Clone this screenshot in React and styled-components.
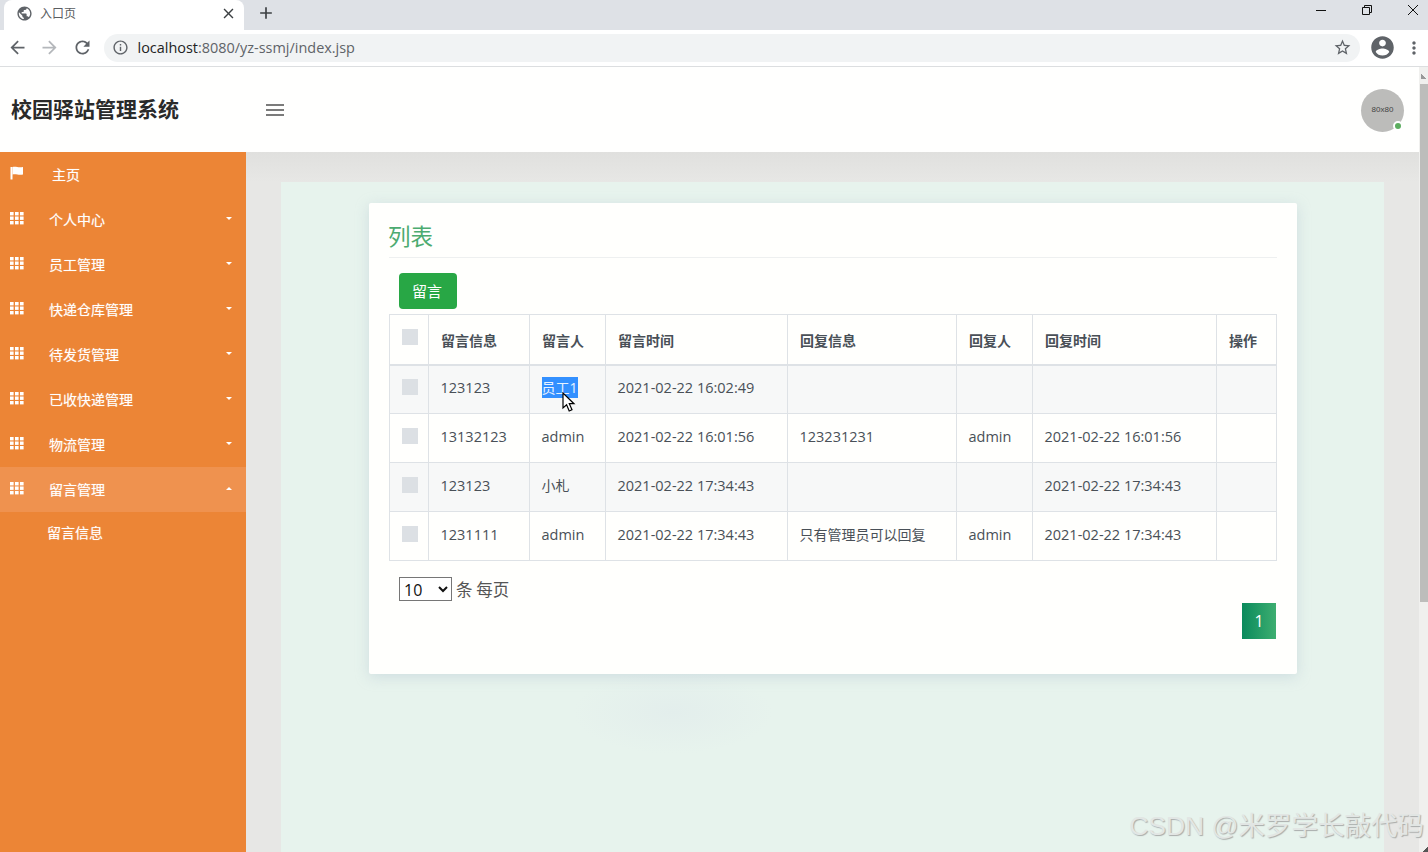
import React from "react";
import styled, { createGlobalStyle } from "styled-components";

const cjk = '"Noto Sans CJK SC", sans-serif';
const latin = `"Open Sans", ${cjk}`;

const Global = createGlobalStyle`
  html, body { margin: 0; height: 100%; overflow: hidden; background: #fff; }
  * { box-sizing: border-box; }
  #root { height: 100%; }
`;

const menu = [
  { label: "个人中心" },
  { label: "员工管理" },
  { label: "快递仓库管理" },
  { label: "待发货管理" },
  { label: "已收快递管理" },
  { label: "物流管理" },
  { label: "留言管理", open: true },
];

const columns = [
  { title: "留言信息", width: 101 },
  { title: "留言人", width: 76 },
  { title: "留言时间", width: 182 },
  { title: "回复信息", width: 169 },
  { title: "回复人", width: 76 },
  { title: "回复时间", width: 184 },
  { title: "操作", width: 60 },
];

const rows = [
  ["123123", "员工1", "2021-02-22 16:02:49", "", "", ""],
  ["13132123", "admin", "2021-02-22 16:01:56", "123231231", "admin", "2021-02-22 16:01:56"],
  ["123123", "小札", "2021-02-22 17:34:43", "", "", "2021-02-22 17:34:43"],
  ["1231111", "admin", "2021-02-22 17:34:43", "只有管理员可以回复", "admin", "2021-02-22 17:34:43"],
];

const Icon = ({ d, size = 24, color = "#5f6368" }) => (
  <svg width={size} height={size} viewBox="0 0 24 24" fill={color}>
    <path d={d} />
  </svg>
);

const GridIcon = () => (
  <svg width="14" height="13" viewBox="0 0 14 13" fill="#fff">
    {[0, 5, 10].map((x) =>
      [0, 4.5, 9].map((y) => <rect key={`${x}-${y}`} x={x} y={y} width="3.6" height="3.4" />)
    )}
  </svg>
);

const FlagIcon = () => (
  <svg width="14" height="14" viewBox="0 0 14 14" fill="#fff">
    <path d="M0.500 1h2v12.500h-2z" />
    <path d="M2.500 1c3.500-1.200 5.500 1.200 10.500 0v7.500c-4.500 1.200-7-1.200-10.500 0z" />
  </svg>
);

const paths = {
  globe:
    "M12 2C6.48 2 2 6.48 2 12s4.480 10 10 10 10-4.480 10-10S17.520 2 12 2zm-1 17.930c-3.950-.490-7-3.850-7-7.930 0-.620.080-1.210.210-1.790L9 15v1c0 1.100.900 2 2 2v1.930zm6.900-2.540c-.260-.810-1-1.390-1.900-1.390h-1v-3c0-.550-.450-1-1-1H8v-2h2c.550 0 1-.450 1-1V7h2c1.100 0 2-.900 2-2v-.410c2.930 1.190 5 4.060 5 7.410 0 2.080-.800 3.970-2.100 5.390z",
  close:
    "M19 6.410 17.590 5 12 10.590 6.410 5 5 6.410 10.590 12 5 17.590 6.410 19 12 13.410 17.590 19 19 17.590 13.410 12z",
  plus: "M19 13h-6v6h-2v-6H5v-2h6V5h2v6h6v2z",
  back: "M20 11H7.830l5.590-5.590L12 4l-8 8 8 8 1.410-1.410L7.830 13H20v-2z",
  forward: "M12 4l-1.410 1.410L16.170 11H4v2h12.170l-5.580 5.590L12 20l8-8z",
  reload:
    "M17.650 6.350C16.200 4.900 14.210 4 12 4c-4.420 0-7.990 3.580-7.990 8s3.570 8 7.990 8c3.730 0 6.840-2.550 7.730-6h-2.080c-.820 2.330-3.040 4-5.650 4-3.310 0-6-2.690-6-6s2.690-6 6-6c1.660 0 3.140.690 4.220 1.780L13 11h7V4l-2.350 2.350z",
  info:
    "M11 7h2v2h-2zm0 4h2v6h-2zm1-9C6.480 2 2 6.480 2 12s4.480 10 10 10 10-4.480 10-10S17.520 2 12 2zm0 18c-4.410 0-8-3.590-8-8s3.590-8 8-8 8 3.590 8 8-3.590 8-8 8z",
  star:
    "M22 9.240l-7.190-.620L12 2 9.190 8.630 2 9.240l5.460 4.730L5.820 21 12 17.270 18.180 21l-1.630-7.030L22 9.240zM12 15.400l-3.760 2.270 1-4.280-3.320-2.880 4.380-.380L12 6.100l1.710 4.040 4.380.380-3.320 2.880 1 4.280L12 15.400z",
  account:
    "M12 2C6.480 2 2 6.480 2 12s4.480 10 10 10 10-4.480 10-10S17.520 2 12 2zm0 3c1.660 0 3 1.340 3 3s-1.340 3-3 3-3-1.340-3-3 1.340-3 3-3zm0 14.200c-2.500 0-4.710-1.280-6-3.220.030-1.990 4-3.080 6-3.080 1.990 0 5.970 1.090 6 3.080-1.290 1.940-3.500 3.220-6 3.220z",
  dots:
    "M12 8c1.100 0 2-.900 2-2s-.900-2-2-2-2 .900-2 2 .900 2 2 2zm0 2c-1.100 0-2 .900-2 2s.900 2 2 2 2-.900 2-2-.900-2-2-2zm0 6c-1.100 0-2 .900-2 2s.900 2 2 2 2-.900 2-2-.900-2-2-2z",
};

const isCjk = (value) => /[^\x00-\x7f]/.test(value);

const CellValue = ({ value }) => {
  if (value === "员工1") {
    return (
      <Selected>
        {value}
        <Pointer width="14" height="21" viewBox="0 0 14 21">
          <path d="M1 1v15l3.600-3.300 2.600 6.300 2.800-1.200-2.700-6.100H12z" fill="#fff" stroke="#000" strokeWidth="1.200" />
        </Pointer>
      </Selected>
    );
  }
  return isCjk(value) ? <CjkValue>{value}</CjkValue> : value;
};

export default function App() {
  return (
    <Window>
      <Global />
      <TabStrip>
        <Tab>
          <Icon d={paths.globe} size={17} />
          <TabTitle>入口页</TabTitle>
          <TabClose><Icon d={paths.close} size={17} color="#3c4043" /></TabClose>
        </Tab>
        <NewTab><Icon d={paths.plus} size={20} color="#3c4043" /></NewTab>
        <WindowControls>
          <svg width="10" height="10" viewBox="0 0 10 10" stroke="#111" fill="none"><path d="M0 5.500h10" /></svg>
          <svg width="10" height="10" viewBox="0 0 10 10" stroke="#111" fill="none"><path d="M.5 2.500h7v7h-7zM2.500 2.500v-2h7v7h-2" /></svg>
          <svg width="10" height="10" viewBox="0 0 10 10" stroke="#111" fill="none"><path d="M0 0l10 10M10 0L0 10" /></svg>
        </WindowControls>
      </TabStrip>
      <Toolbar>
        <NavButton><Icon d={paths.back} size={21} /></NavButton>
        <NavButton><Icon d={paths.forward} size={21} color="#b4b7bb" /></NavButton>
        <NavButton><Icon d={paths.reload} size={21} /></NavButton>
        <Omnibox>
          <Icon d={paths.info} size={17} />
          <Url>localhost<UrlDim>:8080/yz-ssmj/index.jsp</UrlDim></Url>
          <Icon d={paths.star} size={19} />
        </Omnibox>
        <Profile><Icon d={paths.account} size={27} /></Profile>
        <NavButton $narrow><Icon d={paths.dots} size={20} /></NavButton>
      </Toolbar>
      <Viewport>
        <Page>
          <Header>
            <Brand>校园驿站管理系统</Brand>
            <Burger><i /><i /><i /></Burger>
            <Avatar>80x80<OnlineDot /></Avatar>
          </Header>
          <Body>
            <Sidebar>
              <MenuItem>
                <MenuIcon><FlagIcon /></MenuIcon>
                <HomeLabel>主页</HomeLabel>
              </MenuItem>
              {menu.map((item) => (
                <MenuItem key={item.label} $open={item.open}>
                  <MenuIcon><GridIcon /></MenuIcon>
                  <MenuLabel>{item.label}</MenuLabel>
                  <Caret $up={item.open} />
                </MenuItem>
              ))}
              <SubItem>留言信息</SubItem>
            </Sidebar>
            <Main>
              <Panel>
                <Card>
                  <Title>列表</Title>
                  <ActionRow><AddButton>留言</AddButton></ActionRow>
                  <Table>
                    <colgroup>
                      <col style={{ width: 39 }} />
                      {columns.map((c) => <col key={c.title} style={{ width: c.width }} />)}
                    </colgroup>
                    <thead>
                      <tr>
                        <HeadCell><Check $head /></HeadCell>
                        {columns.map((c) => <HeadCell key={c.title}>{c.title}</HeadCell>)}
                      </tr>
                    </thead>
                    <tbody>
                      {rows.map((row, i) => (
                        <Row key={i}>
                          <Cell><Check /></Cell>
                          {row.map((value, j) => (
                            <Cell key={j}><CellValue value={value} /></Cell>
                          ))}
                          <Cell />
                        </Row>
                      ))}
                    </tbody>
                  </Table>
                  <PageSize>
                    <SizeSelect defaultValue="10">
                      <option>10</option>
                      <option>20</option>
                      <option>50</option>
                    </SizeSelect>
                    <span>条 每页</span>
                  </PageSize>
                  <Pagination><PageButton>1</PageButton></Pagination>
                </Card>
              </Panel>
            </Main>
          </Body>
        </Page>
        <Scrollbar>
          <ScrollArrow />
          <ScrollThumb />
          <ScrollArrow $down />
        </Scrollbar>
      </Viewport>
      <Watermark>CSDN @米罗学长敲代码</Watermark>
    </Window>
  );
}

const Window = styled.div`
  position: relative;
  display: flex;
  flex-direction: column;
  width: 1428px;
  height: 852px;
  overflow: hidden;
  font-family: ${latin};
`;

const TabStrip = styled.div`
  display: flex;
  align-items: flex-end;
  height: 30px;
  flex: none;
  padding-left: 4px;
  background: #dee1e6;
`;

const Tab = styled.div`
  display: flex;
  align-items: center;
  width: 240px;
  height: 30px;
  padding: 0 7px 4px 12px;
  background: #fff;
  border-radius: 8px 8px 0 0;
`;

const TabTitle = styled.span`
  flex: 1;
  margin: -2px 0 0 7px;
  font: 12px ${cjk};
  color: #5a5d61;
`;

const TabClose = styled.span`
  display: flex;
`;

const NewTab = styled.span`
  display: flex;
  margin: 0 0 7px 12px;
`;

const WindowControls = styled.div`
  display: flex;
  align-items: center;
  gap: 36px;
  margin: 0 10px 15px auto;
`;

const Toolbar = styled.div`
  display: flex;
  align-items: center;
  flex: none;
  height: 37px;
  padding: 0 0 1px 1px;
  background: #fff;
  border-bottom: 1px solid #dcdee0;
`;

const NavButton = styled.span`
  display: flex;
  justify-content: center;
  width: ${(p) => (p.$narrow ? "28px" : "32.5px")};
  flex: none;
`;

const Omnibox = styled.div`
  display: flex;
  align-items: center;
  flex: 1;
  height: 28px;
  margin: 0 9px 0 5px;
  padding: 0 8px;
  border-radius: 14px;
  background: #f1f3f4;
`;

const Url = styled.span`
  flex: 1;
  margin-left: 9px;
  font: 14.450px ${latin};
  color: #222;
`;

const UrlDim = styled.span`
  color: #5f6368;
`;

const Profile = styled.span`
  display: flex;
  margin-right: 4.500px;
`;

const Viewport = styled.div`
  display: flex;
  flex: 1;
  min-height: 0;
`;

const Page = styled.div`
  display: flex;
  flex-direction: column;
  flex: 1;
  min-width: 0;
`;

const Header = styled.header`
  display: flex;
  align-items: center;
  flex: none;
  height: 85px;
  padding: 0 15px 0 11px;
  background: #fffffe;
`;

const Brand = styled.div`
  width: 255px;
  padding-bottom: 4px;
  font: 700 21px ${cjk};
  color: #2a2a2a;
`;

const Burger = styled.div`
  display: flex;
  flex-direction: column;
  gap: 3px;
  width: 18px;
  i {
    display: block;
    height: 2px;
    background: #7b7b7b;
  }
`;

const Avatar = styled.div`
  position: relative;
  display: flex;
  align-items: center;
  justify-content: center;
  width: 43px;
  height: 43px;
  margin: 1px 0 0 auto;
  padding-bottom: 1px;
  border-radius: 50%;
  background: #bcbcba;
  font: 8px "Liberation Sans", sans-serif;
  color: #444;
`;

const OnlineDot = styled.span`
  position: absolute;
  right: 1px;
  bottom: 1px;
  width: 10px;
  height: 10px;
  border: 2px solid #fff;
  border-radius: 50%;
  background: #5cad5f;
`;

const Body = styled.div`
  display: flex;
  flex: 1;
  min-height: 0;
`;

const Sidebar = styled.nav`
  flex: none;
  width: 246px;
  background: #ec8536;
  color: #fff;
  text-shadow: 0 0 1px rgba(255, 255, 255, 0.5);
`;

const MenuItem = styled.div`
  display: flex;
  align-items: center;
  height: 45px;
  padding: 0 14px 0 10px;
  background: ${(p) => (p.$open ? "#ef924f" : "transparent")};
`;

const MenuIcon = styled.span`
  display: flex;
  width: 39px;
  flex: none;
  margin-top: -3px;
`;

const MenuLabel = styled.span`
  flex: 1;
  padding-bottom: 1px;
  font: 14px ${cjk};
`;

const HomeLabel = styled(MenuLabel)`
  padding: 0 0 2px 3px;
`;

const Caret = styled.span`
  width: 0;
  height: 0;
  margin-top: -3px;
  border-left: 3.500px solid transparent;
  border-right: 3.500px solid transparent;
  border-top: ${(p) => (p.$up ? "0" : "3px solid #fff")};
  border-bottom: ${(p) => (p.$up ? "3px solid #fff" : "0")};
`;

const SubItem = styled.div`
  height: 43px;
  padding-left: 47px;
  font: 14px/41px ${cjk};
`;

const Main = styled.main`
  flex: 1;
  min-width: 0;
  padding: 30px 35px 0;
  background: linear-gradient(#e0e0de, #e7e7e5 30px);
`;

const Panel = styled.div`
  height: 100%;
  padding: 21px 87px 0 88px;
  background: radial-gradient(ellipse 100px 42px at 392px 530px, #e3eeec, transparent), #e7f3ed;
`;

const Card = styled.section`
  height: 471px;
  padding: 12px 20px 0;
  background: #fffffd;
  border-radius: 2px;
  box-shadow: 0 3px 14px rgba(170, 190, 205, 0.4);
`;

const Title = styled.h2`
  height: 43px;
  margin: 0;
  text-indent: -1px;
  font: 400 22.500px/40px ${cjk};
  color: #4cab70;
  border-bottom: 1px solid #eef0f0;
`;

const ActionRow = styled.div`
  height: 56px;
  padding: 15px 0 0 10px;
`;

const AddButton = styled.button`
  display: block;
  width: 58px;
  height: 36px;
  padding: 0 2px 2px 0;
  border: 0;
  border-radius: 4px;
  background: #28a745;
  font: 15px ${cjk};
  color: #fff;
`;

const Table = styled.table`
  width: 888px;
  border-collapse: collapse;
  table-layout: fixed;
  font: 14.500px ${latin};
  color: #495057;
`;

const HeadCell = styled.th`
  height: 50px;
  padding: 1px 12px 0;
  border: 1px solid #dee2e6;
  border-bottom-width: 2px;
  text-align: left;
  font: 700 14px ${cjk};
  vertical-align: middle;
`;

const Row = styled.tr`
  height: 49px;
  &:nth-child(odd) {
    background: #f7f8f8;
  }
`;

const Cell = styled.td`
  padding: 0 12px 4px 11.500px;
  border: 1px solid #dee2e6;
  white-space: nowrap;
`;

const CjkValue = styled.span`
  font: 14px ${cjk};
`;

const Check = styled.span`
  display: block;
  width: 16px;
  height: 16px;
  margin-top: ${(p) => (p.$head ? "-6px" : "0")};
  background: #dce0e4;
`;

const Selected = styled.span`
  position: relative;
  display: inline-block;
  background: #3390ff;
  color: #e8f2ff;
  font-size: 14px;
  line-height: 21px;
`;

const Pointer = styled.svg`
  position: absolute;
  left: 20px;
  top: 15px;
`;

const PageSize = styled.div`
  display: flex;
  align-items: center;
  gap: 4px;
  margin: 16px 0 0 10px;
  font: 16.500px ${cjk};
  color: #555;
`;

const SizeSelect = styled.select`
  width: 53px;
  height: 24px;
  font: 16px "Open Sans", sans-serif;
  color: #111;
  background: #fff;
`;

const Pagination = styled.div`
  display: flex;
  justify-content: flex-end;
  margin: 2px 1px 0 0;
`;

const PageButton = styled.span`
  display: flex;
  align-items: center;
  justify-content: center;
  width: 34px;
  height: 36px;
  background: linear-gradient(90deg, #0a8a5c, #3dae70);
  font-size: 16px;
  color: #fff;
`;

const Scrollbar = styled.div`
  display: flex;
  flex-direction: column;
  flex: none;
  width: 9px;
  background: #f0f0ee;
`;

const ScrollArrow = styled.span`
  height: 17px;
  flex: none;
  background: ${(p) =>
    p.$down
      ? "linear-gradient(135deg, transparent 60%, #555 60%) bottom right / 7px 7px no-repeat"
      : "linear-gradient(225deg, transparent 60%, #999 60%) center right / 7px 7px no-repeat"};
  margin-top: ${(p) => (p.$down ? "auto" : "0")};
`;

const ScrollThumb = styled.span`
  height: 518px;
  flex: none;
  margin-left: 1px;
  background: #bdbdbb;
`;

const Watermark = styled.div`
  position: absolute;
  right: 4px;
  bottom: 9px;
  font: 26.500px "Liberation Sans", ${cjk};
  color: #e2e6e4;
  text-shadow: 1px 1px 1px #a9acab;
  white-space: nowrap;
`;
